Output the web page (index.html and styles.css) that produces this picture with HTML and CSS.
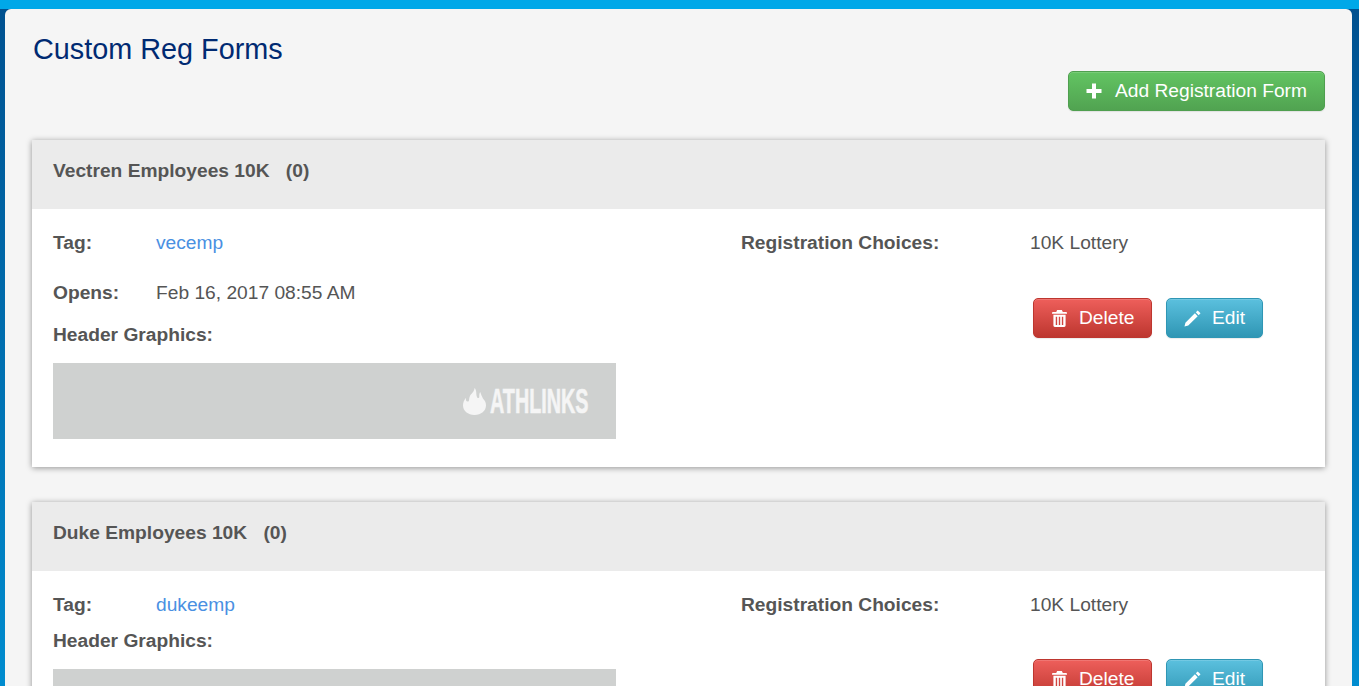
FILE: index.html
```html
<!DOCTYPE html>
<html lang="en">
<head>
  <meta charset="UTF-8" />
  <meta name="viewport" content="width=device-width, initial-scale=1.0"/>
  <title>Custom Reg Forms</title>
  <link rel="stylesheet" href="styles.css">
</head>
<body>
  <div class="top-bar"></div>

  <main class="content">
    <h1 class="page-title">Custom Reg Forms</h1>

    <div class="page-actions">
      <a class="btn btn-add" href="#">
        <svg class="icon icon-plus" viewBox="0 0 16 16"><path d="M6 0.500h4V6h5.500v4H10v5.500H6V10H0.500V6H6z"/></svg>
        Add Registration Form
      </a>
    </div>

    <section class="form-card">
      <h2 class="card-head">Vectren Employees 10K <span class="count">(0)</span></h2>
      <div class="card-body">
        <div class="col-left">
          <div class="row row-tag"><span class="label">Tag:</span><a class="tag" href="#">vecemp</a></div>
          <div class="row row-opens"><span class="label">Opens:</span><span>Feb 16, 2017 08:55 AM</span></div>
          <div class="label graphics-label">Header Graphics:</div>
          <div class="graphic">
            <svg class="flame" viewBox="0 0 24 28"><path d="M12 0c3 3 1 7 3 10 1 1 2 0 2-1 0-2 0-4 1-5 1 3 2 5 3 7 2 2 3 4 3 7 0 6-5 10-12 10S0 24 0 18c0-3 1-5 3-8 0 2 0 4 2 4 2 0 1-3 2-5 1-3 5-5 5-9z"/></svg>
            <span class="brand">ATHLINKS</span>
          </div>
        </div>
        <div class="col-right">
          <div class="row row-choices"><span class="label">Registration Choices:</span><span>10K Lottery</span></div>
          <div class="card-actions">
            <a class="btn btn-delete" href="#">
              <svg class="icon icon-trash" viewBox="0 0 16 18"><path d="M5.500 0h5l1 2H15a1 1 0 0 1 1 1v1H0V3a1 1 0 0 1 1-1h3.500zM1.500 5h13v11.500a1.500 1.500 0 0 1-1.500 1.500H3a1.500 1.500 0 0 1-1.500-1.500zM4 7v9h1.500V7zm3.250 0v9h1.500V7zM10.500 7v9H12V7z" fill-rule="evenodd"/></svg>
              Delete
            </a>
            <a class="btn btn-edit" href="#">
              <svg class="icon icon-pencil" viewBox="0 0 18 18"><path d="M14.500 0.500l3 3-2 2-3-3zM11.500 3.500l3 3L4.500 16.500 0.500 17.500l1-4z"/></svg>
              Edit
            </a>
          </div>
        </div>
      </div>
    </section>

    <section class="form-card form-card-short">
      <h2 class="card-head">Duke Employees 10K <span class="count">(0)</span></h2>
      <div class="card-body">
        <div class="col-left">
          <div class="row row-tag"><span class="label">Tag:</span><a class="tag" href="#">dukeemp</a></div>
          <div class="label graphics-label">Header Graphics:</div>
          <div class="graphic">
            <svg class="flame" viewBox="0 0 24 28"><path d="M12 0c3 3 1 7 3 10 1 1 2 0 2-1 0-2 0-4 1-5 1 3 2 5 3 7 2 2 3 4 3 7 0 6-5 10-12 10S0 24 0 18c0-3 1-5 3-8 0 2 0 4 2 4 2 0 1-3 2-5 1-3 5-5 5-9z"/></svg>
            <span class="brand">ATHLINKS</span>
          </div>
        </div>
        <div class="col-right">
          <div class="row row-choices"><span class="label">Registration Choices:</span><span>10K Lottery</span></div>
          <div class="card-actions">
            <a class="btn btn-delete" href="#">
              <svg class="icon icon-trash" viewBox="0 0 16 18"><path d="M5.500 0h5l1 2H15a1 1 0 0 1 1 1v1H0V3a1 1 0 0 1 1-1h3.500zM1.500 5h13v11.500a1.500 1.500 0 0 1-1.500 1.500H3a1.500 1.500 0 0 1-1.500-1.500zM4 7v9h1.500V7zm3.250 0v9h1.500V7zM10.500 7v9H12V7z" fill-rule="evenodd"/></svg>
              Delete
            </a>
            <a class="btn btn-edit" href="#">
              <svg class="icon icon-pencil" viewBox="0 0 18 18"><path d="M14.500 0.500l3 3-2 2-3-3zM11.500 3.500l3 3L4.500 16.500 0.500 17.500l1-4z"/></svg>
              Edit
            </a>
          </div>
        </div>
      </div>
    </section>
  </main>
</body>
</html>
```

FILE: styles.css
```css
html {
  overflow: hidden;
}

body {
  margin: 0;
  height: 686px;
  overflow: hidden;
  font-family: "Liberation Sans", Arial, sans-serif;
  font-size: 19.2px;
  line-height: 20px;
  color: #555;
  background: linear-gradient(to bottom, #00508f, #008ccf);
}

.top-bar {
  height: 9px;
  background: #00a8e8;
}

.content {
  margin: 0 7px 0 5px;
  padding: 20px 27px 40px;
  height: 800px;
  background: #f5f5f5;
  border-radius: 6px 6px 0 0;
}

.page-title {
  margin: 0 0 0 1px;
  font-size: 28.8px;
  line-height: 40px;
  font-weight: normal;
  color: #002a72;
}

.page-actions {
  display: flex;
  justify-content: flex-end;
  margin-top: 2px;
  margin-bottom: 29px;
}

.btn {
  display: inline-flex;
  align-items: center;
  height: 40px;
  box-sizing: border-box;
  border-radius: 5px;
  border: 1px solid;
  color: #fff;
  text-decoration: none;
  font-size: 19.2px;
  box-shadow: inset 0 1px 0 rgba(255,255,255,0.15), 0 1px 1px rgba(0,0,0,0.08);
}

.btn-add {
  width: 257px;
  padding-left: 17px;
  background: linear-gradient(to bottom, #62c462, #51a351);
  border-color: #4f9f4f;
}

.btn-delete {
  width: 119px;
  padding-left: 18px;
  background: linear-gradient(to bottom, #ee5f5b, #bd362f);
  border-color: #bd362f;
}

.btn-edit {
  width: 97px;
  padding-left: 17px;
  background: linear-gradient(to bottom, #5bc0de, #2f96b4);
  border-color: #2f96b4;
}

.icon {
  fill: #fff;
  flex: none;
}

.icon-plus {
  width: 16px;
  height: 16px;
  margin-right: 13px;
}

.icon-trash {
  width: 15px;
  height: 17px;
  margin-right: 12px;
}

.icon-pencil {
  width: 17px;
  height: 17px;
  margin-right: 11px;
}

.form-card {
  margin-bottom: 35px;
  background: #fff;
  box-shadow: 0 1px 6px rgba(0,0,0,0.4);
}

.card-head {
  margin: 0;
  padding: 0 21px;
  height: 69px;
  line-height: 62px;
  font-size: 19.2px;
  font-weight: bold;
  background: #ebebeb;
}

.count {
  margin-left: 11px;
}

.card-body {
  display: flex;
  padding: 24px 0 28px 21px;
}

.col-left {
  width: 688px;
}

.label {
  font-weight: bold;
}

.row {
  display: flex;
}

.row-tag .label,
.row-opens .label {
  width: 103px;
}

.tag {
  color: #4a90e2;
  text-decoration: none;
}

.row-opens {
  margin-top: 30px;
}

.graphics-label {
  margin-top: 22px;
}

.graphic {
  display: flex;
  align-items: center;
  justify-content: flex-end;
  width: 563px;
  height: 76px;
  margin-top: 18px;
  background: #cfd1d0;
  color: #f5f5f5;
}

.flame {
  width: 23px;
  height: 27px;
  fill: #f5f5f5;
}

.brand {
  display: inline-block;
  width: 100px;
  margin: 0 26px 0 4px;
  font-size: 35px;
  line-height: 30px;
  font-weight: bold;
  white-space: nowrap;
  -webkit-text-stroke: 0.6px #f5f5f5;
  transform: scaleX(0.565);
  transform-origin: left center;
}

.row-choices .label {
  width: 289px;
}

.card-actions {
  display: flex;
  gap: 14px;
  margin-top: 45px;
  padding-left: 292px;
}

.form-card-short .graphics-label {
  margin-top: 16px;
}

.form-card-short .card-actions {
  margin-top: 44px;
}
```
